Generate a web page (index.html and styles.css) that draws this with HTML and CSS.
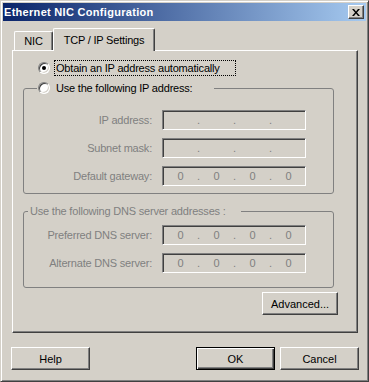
FILE: index.html
```html
<!DOCTYPE html>
<html lang="en">

<head>
    <meta charset="UTF-8">
    <title>Ethernet NIC Configuration</title>
    <link rel="stylesheet" href="styles.css">
</head>

<body>
    <div class="window">
        <div class="titlebar">
            <span class="title">Ethernet NIC Configuration</span>
            <button class="close" aria-label="Close">
                <svg width="8" height="7" viewBox="0 0 8 7">
                    <path d="M0 0 L2 0 L4 2.5 L6 0 L8 0 L5 3.5 L8 7 L6 7 L4 4.5 L2 7 L0 7 L3 3.5 Z" fill="#000"/>
                </svg>
            </button>
        </div>

        <div class="tabs">
            <div class="tab">NIC</div>
            <div class="tab active">TCP / IP Settings</div>
        </div>

        <div class="panel">
            <label class="option">
                <input type="radio" name="ipmode" checked>
                <span class="focus">Obtain an IP address automatically</span>
            </label>

            <fieldset class="group ipgroup">
                <legend class="legend-radio">
                    <label class="option-inline">
                        <input type="radio" name="ipmode">
                        <span class="opt-text">Use the following IP address:</span>
                    </label>
                </legend>
                <div class="rows">
                    <span class="lbl">IP address:</span>
                    <div class="ip"><span class="oct"></span><span class="dot">.</span><span class="oct"></span><span class="dot">.</span><span class="oct"></span><span class="dot">.</span><span class="oct"></span></div>
                    <span class="lbl">Subnet mask:</span>
                    <div class="ip"><span class="oct"></span><span class="dot">.</span><span class="oct"></span><span class="dot">.</span><span class="oct"></span><span class="dot">.</span><span class="oct"></span></div>
                    <span class="lbl">Default gateway:</span>
                    <div class="ip"><span class="oct">0</span><span class="dot">.</span><span class="oct">0</span><span class="dot">.</span><span class="oct">0</span><span class="dot">.</span><span class="oct">0</span></div>
                </div>
            </fieldset>

            <fieldset class="group dnsgroup">
                <legend class="legend-text">Use the following DNS server addresses :</legend>
                <div class="rows">
                    <span class="lbl">Preferred DNS server:</span>
                    <div class="ip"><span class="oct">0</span><span class="dot">.</span><span class="oct">0</span><span class="dot">.</span><span class="oct">0</span><span class="dot">.</span><span class="oct">0</span></div>
                    <span class="lbl">Alternate DNS server:</span>
                    <div class="ip"><span class="oct">0</span><span class="dot">.</span><span class="oct">0</span><span class="dot">.</span><span class="oct">0</span><span class="dot">.</span><span class="oct">0</span></div>
                </div>
            </fieldset>

            <button class="btn advanced">Advanced...</button>
        </div>

        <div class="actions">
            <button class="btn help">Help</button>
            <button class="btn default">OK</button>
            <button class="btn">Cancel</button>
        </div>
    </div>
</body>

</html>
```

FILE: styles.css
```css
* {
    box-sizing: border-box;
}

body {
    margin: 0;
    background-color: #d4d0c8;
    font-family: "Liberation Sans", Arial, sans-serif;
    font-size: 11px;
    letter-spacing: -0.2px;
    color: #000;
}

.window {
    width: 369px;
    height: 382px;
    background-color: #d4d0c8;
    border: 1px solid;
    border-color: #d4d0c8 #404040 #404040 #d4d0c8;
    box-shadow: inset 1px 1px #fff, inset -1px -1px #808080;
    padding: 2px;
    display: flex;
    flex-direction: column;
}

/* title bar */
.titlebar {
    height: 18px;
    display: flex;
    align-items: center;
    padding: 0 2px 0 1px;
    background: linear-gradient(to right, #0a246a, #a6caf0);
    color: #fff;
}

.title {
    font-weight: bold;
    letter-spacing: 0.3px;
}

.close {
    margin-left: auto;
    width: 16px;
    height: 14px;
    padding: 0;
    display: flex;
    align-items: center;
    justify-content: center;
    background-color: #d4d0c8;
    border: 1px solid;
    border-color: #fff #404040 #404040 #fff;
    box-shadow: inset -1px -1px #808080;
}

/* tabs */
.tabs {
    height: 22px;
    margin-top: 7px;
    padding-left: 11px;
    display: flex;
    align-items: flex-end;
}

.tab {
    height: 19px;
    width: 39px;
    display: flex;
    align-items: center;
    justify-content: center;
    border: 1px solid;
    border-bottom: none;
    border-color: #fff #404040 #404040 #fff;
    border-radius: 2px 2px 0 0;
    box-shadow: inset -1px 0 #808080;
    background-color: #d4d0c8;
}

.tab.active {
    position: relative;
    z-index: 1;
    width: 102px;
    height: 23px;
    margin-bottom: -1px;
    padding-bottom: 1px;
}

/* tab page */
.panel {
    height: 283px;
    margin: 0 8px 0 9px;
    border: 1px solid;
    border-color: #fff #404040 #404040 #fff;
    box-shadow: inset -1px -1px #808080;
    display: flex;
    flex-direction: column;
    align-items: flex-start;
}

input[type="radio"] {
    appearance: none;
    width: 12px;
    height: 12px;
    margin: 0;
    border-radius: 50%;
    border: 1px solid;
    border-color: #808080 #fff #fff #808080;
    box-shadow: inset 1px 1px #404040, inset -1px -1px #d4d0c8;
    background-color: #fff;
    display: grid;
    place-content: center;
}

input[type="radio"]:checked::after {
    content: "";
    width: 4px;
    height: 4px;
    border-radius: 50%;
    background-color: #000;
}

.option {
    margin: 9px 0 0 25px;
    display: flex;
    align-items: center;
    gap: 4px;
}

.focus {
    width: 182px;
    height: 16px;
    line-height: 14px;
    padding: 0 1px;
    border: 1px dotted #000;
}

.option-inline {
    display: flex;
    align-items: center;
    gap: 4px;
    height: 16px;
}

.opt-text {
    padding-left: 2px;
}

/* group boxes */
.group {
    width: 311px;
    margin: 4px 0 0 10px;
    padding: 14px 0 7px 0;
    border: 1px solid #808080;
    border-radius: 3px;
    min-inline-size: 0;
}

.legend-radio {
    margin-left: 13px;
    padding: 0 22px 0 1px;
}

.dnsgroup {
    margin-top: 10px;
    padding: 7px 0 14px 0;
}

.legend-text {
    margin-left: 4px;
    padding: 0 15px 0 2px;
    line-height: 14px;
    color: #808080;
}

.rows {
    display: grid;
    grid-template-columns: 128px 144px;
    grid-auto-rows: 20px;
    column-gap: 10px;
    row-gap: 8px;
}

.lbl {
    color: #808080;
    text-align: right;
    align-self: center;
}

.ip {
    display: flex;
    align-items: center;
    padding-left: 1px;
    color: #808080;
    border: 1px solid;
    border-color: #808080 #fff #fff #808080;
    box-shadow: inset 1px 1px #404040, inset -1px -1px #d4d0c8;
}

.oct {
    width: 33px;
    text-align: center;
}

.dot {
    width: 3px;
    text-align: center;
}

/* buttons */
.btn {
    width: 79px;
    height: 23px;
    padding: 0;
    font: inherit;
    color: #000;
    background-color: #d4d0c8;
    border: 1px solid;
    border-color: #fff #404040 #404040 #fff;
    box-shadow: inset -1px -1px #808080;
}

.btn.default {
    border-color: #000;
    box-shadow: inset 1px 1px #fff, inset -1px -1px #404040, inset -2px -2px #808080;
}

.advanced {
    width: 76px;
    align-self: flex-end;
    margin: 4px 19px 0 0;
}

.actions {
    margin-top: 14px;
    padding: 0 7px 0 8px;
    display: flex;
    gap: 5px;
}

.help {
    margin-right: auto;
}
```
